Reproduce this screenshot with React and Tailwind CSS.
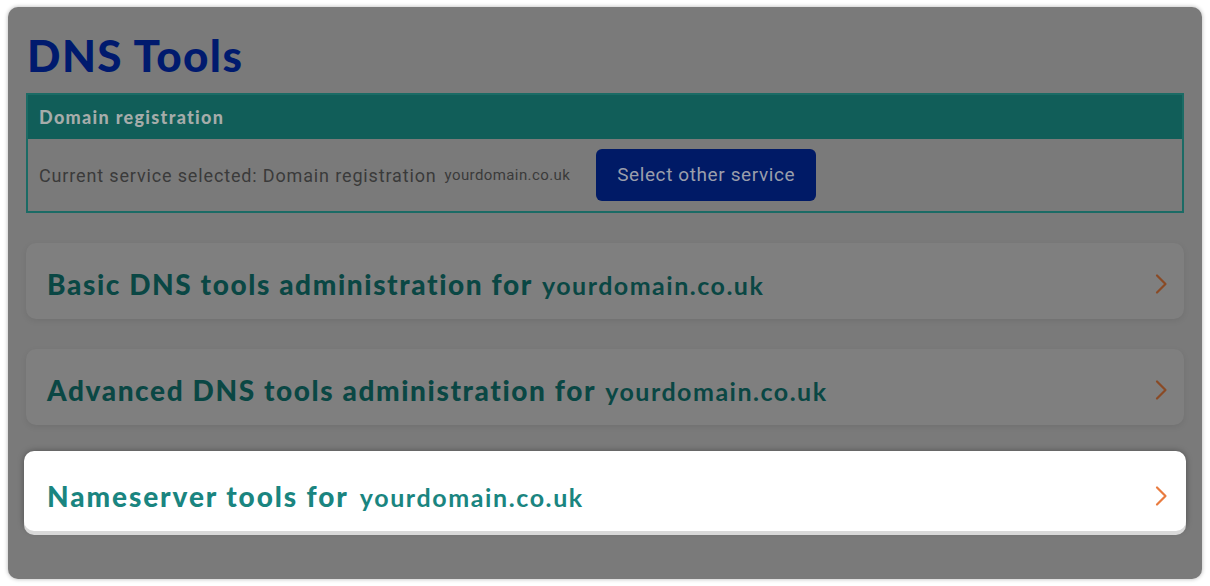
import React from "react";

const Chevron = ({ color }) => (
  <svg width="14" height="22" viewBox="0 0 14 22" fill="none">
    <path d="M3 2.5l8.5 8.5-8.5 8.5" stroke={color} strokeWidth="2.2" strokeLinecap="round" strokeLinejoin="round" />
  </svg>
);

const ToolCard = ({ label, active }) => (
  <div
    className={
      active
        ? "-mt-[4px] -mx-[2px] flex items-center justify-between rounded-[10px] bg-white pl-[23px] pr-[18px] pt-[10px] h-[80px] shadow-[0_4px_0_#d9d9d9,0_0_6px_rgba(0,0,0,0.35)]"
        : "flex items-center justify-between rounded-[10px] bg-[#7f7f7f] pl-[21px] pr-[16px] pt-[5px] h-[76px] shadow-[0_2px_6px_rgba(0,0,0,0.08)]"
    }
  >
    <div className={active ? "flex items-baseline text-[#1a8580]" : "flex items-baseline text-[#0a4744]"}>
      <span className={active ? "font-['Lato'] font-black text-[28px] tracking-[1.9px]" : "font-['Lato'] font-black text-[28px] tracking-[1.6px]"}>
        {label}
      </span>
      <span className={active ? "font-['Lato'] font-bold text-[25px] tracking-[1.6px] ml-[11px]" : "font-['Lato'] font-bold text-[25px] tracking-[1.5px] ml-[9px]"}>
        yourdomain.co.uk
      </span>
    </div>
    <Chevron color={active ? "#e97b3f" : "#8a4a25"} />
  </div>
);

export default function App() {
  return (
    <div className="bg-white min-h-[586px] pt-[7px] pb-[7px] px-[8px]">
      <div className="rounded-[10px] bg-[#7a7a7a] shadow-[0_0_4px_rgba(0,0,0,0.3)] px-[18px] pt-[24px] h-[572px]">
        <h1 className="font-['Lato'] font-black text-[44px] leading-[48px] tracking-[1.4px] text-[#001a6e] ml-[1px]">DNS Tools</h1>
        <div className="mt-[14px] border-2 border-[#1b6b65]">
          <div className="bg-[#115e59] h-[44px] flex items-center px-[11px]">
            <span className="font-['Lato'] font-black text-[18px] tracking-[1.3px] text-[#a6acaa]">Domain registration</span>
          </div>
          <div className="flex items-center h-[72px] px-[11px]">
            <span className="font-['Roboto'] text-[18px] tracking-[0.85px] text-[#3a3a3a]">Current service selected: Domain registration</span>
            <span className="font-['Roboto'] text-[15px] tracking-[0.4px] text-[#3a3a3a] ml-[8px]">yourdomain.co.uk</span>
            <button className="ml-[26px] h-[52px] w-[220px] rounded-[6px] bg-[#001a66] font-['Roboto'] text-[19px] tracking-[0.6px] text-[#9a9eab]">
              Select other service
            </button>
          </div>
        </div>
        <div className="mt-[30px] flex flex-col gap-[30px]">
          <ToolCard label="Basic DNS tools administration for" />
          <ToolCard label="Advanced DNS tools administration for" />
          <ToolCard label="Nameserver tools for" active />
        </div>
      </div>
    </div>
  );
}
